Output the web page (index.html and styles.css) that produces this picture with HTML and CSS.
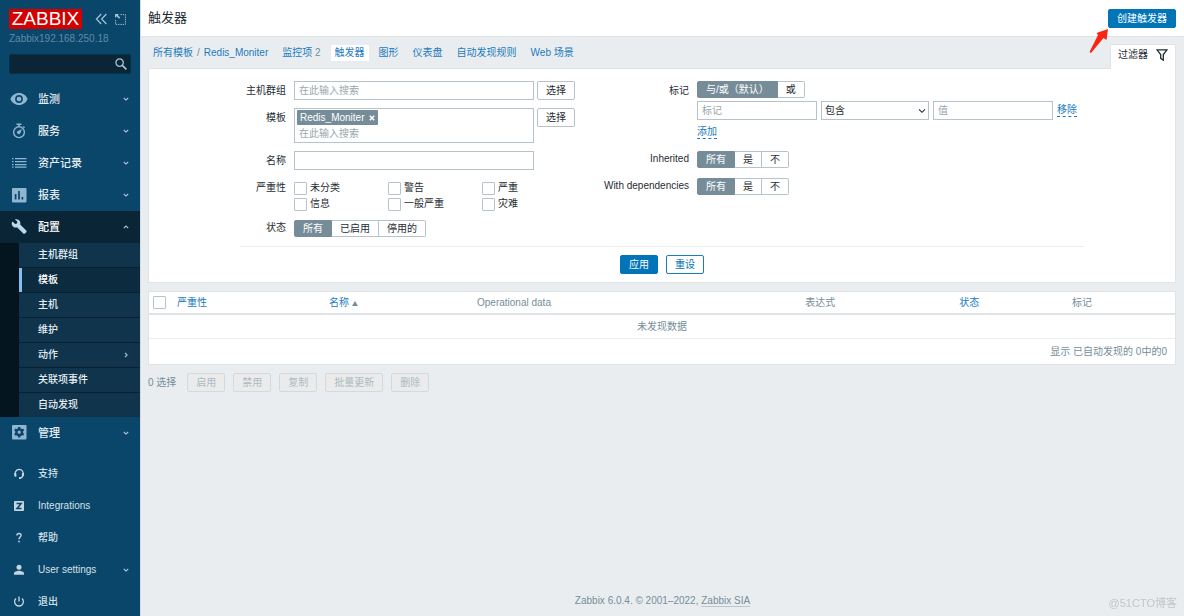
FILE: index.html
```html
<!DOCTYPE html>
<html lang="zh-CN">
<head>
<meta charset="utf-8">
<meta name="viewport" content="width=device-width, initial-scale=1">
<title>触发器</title>
<link rel="stylesheet" href="styles.css">
</head>
<body>
<svg class="defs" aria-hidden="true">
  <symbol id="down" viewBox="0 0 8 8"><path d="M1.8 3 4 5.1 6.2 3" fill="none" stroke="currentColor" stroke-width="1.1"/></symbol>
  <symbol id="up" viewBox="0 0 8 8"><path d="M1.8 5.2 4 3.1 6.2 5.2" fill="none" stroke="currentColor" stroke-width="1.1"/></symbol>
  <symbol id="right" viewBox="0 0 8 8"><path d="M3 1.8 5.1 4 3 6.2" fill="none" stroke="currentColor" stroke-width="1.1"/></symbol>
</svg>
<div class="page">
  <aside class="sidebar">
    <div class="brand">
      <a class="logo" href="#">ZABBIX</a>
      <button class="icon-button" aria-label="收起"><svg width="13" height="12" viewBox="0 0 13 12"><path d="M6.2 1 1.4 6l4.8 5M11.4 1 6.6 6l4.8 5" fill="none" stroke="currentColor" stroke-width="1.2"/></svg></button>
      <button class="icon-button" aria-label="隐藏"><svg width="11" height="11" viewBox="0 0 11 11"><path d="M5.5.6h4.9v9.8H.6V5.5" fill="none" stroke="currentColor" stroke-dasharray="1.3 1"/><path d="M0 0h4L2.8 1.2l2.4 2.4-1.1 1.1-2.5-2.5L0 4z" fill="currentColor"/></svg></button>
    </div>
    <div class="server">Zabbix192.168.250.18</div>
    <form class="search">
      <input type="text" aria-label="搜索">
      <button class="icon-button" type="button" aria-label="搜索"><svg width="12" height="12" viewBox="0 0 12 12"><circle cx="4.6" cy="4.6" r="3.7" fill="none" stroke="currentColor" stroke-width="1.3"/><path d="m7.3 7.3 4.1 4" stroke="currentColor" stroke-width="1.7"/></svg></button>
    </form>
    <ul class="menu">
      <li><a href="#"><svg class="icon" viewBox="0 0 18 18"><path d="M9 3C5 3 1.8 5.400.4 9 1.800 12.600 5 15 9 15s7.200-2.400 8.600-6C16.200 5.400 13 3 9 3z" fill="currentColor"/><circle cx="9" cy="9" r="3.900" fill="#0a466a"/><circle cx="9" cy="9" r="2.300" fill="currentColor"/></svg><span>监测</span><svg class="arrow"><use href="#down"/></svg></a></li>
      <li><a href="#"><svg class="icon" viewBox="0 0 18 18"><g fill="none" stroke="currentColor" stroke-width="1.400"><circle cx="9" cy="10.200" r="5.400"/><path d="M6.500 2.200h5M9 2.500V5M13.200 4.500l1.300 1.300"/></g><path d="m12 7-1.700 4.200a1.700 1.700 0 1 1-2.300-2.300z" fill="currentColor"/></svg><span>服务</span><svg class="arrow"><use href="#down"/></svg></a></li>
      <li><a href="#"><svg class="icon" viewBox="0 0 18 18"><path d="M2 4.700h1.500M2 7.700h1.500M2 10.700h1.500M2 13.200h1.500M5 4.700h11.500M5 7.700h11.500M5 10.700h11.500M5 13.200h11.500" stroke="currentColor" stroke-width="1.200"/></svg><span>资产记录</span><svg class="arrow"><use href="#down"/></svg></a></li>
      <li><a href="#"><svg class="icon" viewBox="0 0 18 18"><rect x="2" y="2" width="14.500" height="14.500" rx="1" fill="currentColor"/><path d="M5.600 8v5.500M9 5v8.500M12.400 11v2.500" stroke="#0a466a" stroke-width="1.700"/></svg><span>报表</span><svg class="arrow"><use href="#down"/></svg></a></li>
      <li class="open"><a href="#"><svg class="icon" viewBox="0 0 18 18"><path d="m2.500 3.400 2.700 2.500 1.800-.4.300-1.900L4.900 1.400c2.300-.7 4.600.4 5.300 2.500.3.900.2 1.800 0 2.600l6 6c.6.6.6 1.200.1 1.700l-1.300 1.300c-.5.5-1.100.5-1.700-.1l-6-6c-2.500.7-4.900-.4-5.500-2.900-.3-1.100 0-2.200.7-3.100z" fill="currentColor"/></svg><span>配置</span><svg class="arrow"><use href="#up"/></svg></a>
        <ul class="submenu">
          <li><a href="#">主机群组</a></li>
          <li class="current"><a href="#">模板</a></li>
          <li><a href="#">主机</a></li>
          <li><a href="#">维护</a></li>
          <li><a href="#">动作<svg class="arrow"><use href="#right"/></svg></a></li>
          <li><a href="#">关联项事件</a></li>
          <li><a href="#">自动发现</a></li>
        </ul>
      </li>
      <li><a href="#"><svg class="icon" viewBox="0 0 18 18"><rect x="2" y="1" width="14.500" height="14.500" rx="1" fill="currentColor"/><circle cx="9.200" cy="8.200" r="2.800" fill="none" stroke="#0a466a" stroke-width="2.400"/><path d="M9.200 3v2M9.200 11.400v2M4.700 5.600l1.700 1M12 9.800l1.700 1M4.700 10.800l1.700-1M12 6.600l1.700-1" stroke="#0a466a" stroke-width="2.300"/></svg><span>管理</span><svg class="arrow"><use href="#down"/></svg></a></li>
    </ul>
    <ul class="menu user-menu">
      <li><a href="#"><svg class="icon" viewBox="0 0 18 18"><path d="M6 11.300A4.300 4.300 0 0 1 9 4.300a4.300 4.300 0 0 1 4.300 4.400c0 2.500-1.400 4-3.600 4.500" fill="none" stroke="currentColor" stroke-width="1.300"/><path d="M4.300 8h2v3.500h-2zM11.900 8h1.900v3h-1.900zM9 12.300h1.900v1.600H9z" fill="currentColor"/></svg><span>支持</span></a></li>
      <li><a href="#"><svg class="icon" viewBox="0 0 18 18"><rect x="4" y="4" width="10" height="10" rx="1" fill="currentColor"/><path d="M6.500 6.500h4.700L7 11.500h4.600" fill="none" stroke="#0a466a" stroke-width="1.500"/></svg><span>Integrations</span></a></li>
      <li><a href="#"><svg class="icon" viewBox="0 0 18 18"><path d="M6.900 6.500c0-1.300.9-2 2.100-2s2.100.7 2.100 1.800c0 1.600-2.100 1.800-2.100 3.900" fill="none" stroke="currentColor" stroke-width="1.400"/><path d="M8.200 11.700h1.600v1.600H8.200z" fill="currentColor"/></svg><span>帮助</span></a></li>
      <li><a href="#"><svg class="icon" viewBox="0 0 18 18"><circle cx="9" cy="6.200" r="2.500" fill="currentColor"/><path d="M4 13.700v-1.200C4 10.700 7 9.800 9 9.800s5 .9 5 2.700v1.200z" fill="currentColor"/></svg><span>User settings</span><svg class="arrow"><use href="#down"/></svg></a></li>
      <li><a href="#"><svg class="icon" viewBox="0 0 18 18"><path d="M6 5.400a4.400 4.400 0 1 0 6 0M9 3.500v5" fill="none" stroke="currentColor" stroke-width="1.300"/></svg><span>退出</span></a></li>
    </ul>
  </aside>

  <div class="content">
    <header class="header">
      <h1>触发器</h1>
      <div class="create">
        <button class="btn primary">创建触发器</button>
        <svg class="pointer" width="22" height="28" viewBox="0 0 22 28"><path d="m20 2-1.500 11-3-2L3 26l-1.500-1L10 8 8.500 6z" fill="#fb2413"/></svg>
      </div>
    </header>
    <main>
      <div class="top-row">
        <nav class="crumbs">
          <span class="path"><a href="#">所有模板</a><span>/</span><a href="#">Redis_Moniter</a></span>
          <span><a href="#">监控项</a> <span>2</span></span>
          <a class="selected" href="#">触发器</a>
          <a href="#">图形</a>
          <a href="#">仪表盘</a>
          <a href="#">自动发现规则</a>
          <a href="#">Web 场景</a>
        </nav>
        <button class="filter-tab">过滤器<svg width="12" height="12" viewBox="0 0 12 12"><path d="M1 .8h10L7.300 5.500v5.700L4.700 9.400V5.500z" fill="none" stroke="currentColor" stroke-width="1.300"/></svg></button>
      </div>

      <form class="panel filter">
        <div class="filter-body">
          <div class="fields left">
            <label for="groups">主机群组</label>
            <div class="pick"><div class="multi"><input id="groups" type="text" placeholder="在此输入搜索"></div><button class="btn plain" type="button">选择</button></div>
            <label for="templates">模板</label>
            <div class="pick"><div class="multi"><span class="tag">Redis_Moniter<button type="button" aria-label="移除"><svg width="6" height="6" viewBox="0 0 6 6"><path d="m.8.800 4.400 4.400M5.200.8.800 5.200" stroke="currentColor" stroke-width="1.500"/></svg></button></span><input id="templates" type="text" placeholder="在此输入搜索"></div><button class="btn plain" type="button">选择</button></div>
            <label for="name">名称</label>
            <div class="pick"><input id="name" class="box" type="text"></div>
            <span class="label">严重性</span>
            <div class="checks">
              <label><input type="checkbox">未分类</label><label><input type="checkbox">警告</label><label><input type="checkbox">严重</label>
              <label><input type="checkbox">信息</label><label><input type="checkbox">一般严重</label><label><input type="checkbox">灾难</label>
            </div>
            <span class="label short">状态</span>
            <div class="segments"><label><input type="radio" name="state" checked>所有</label><label><input type="radio" name="state">已启用</label><label><input type="radio" name="state">停用的</label></div>
          </div>
          <div class="fields right">
            <span class="label">标记</span>
            <div class="tags">
              <div class="segments"><label><input type="radio" name="eval" checked>与/或（默认）</label><label><input type="radio" name="eval">或</label></div>
              <div class="tag-row">
                <input class="box" type="text" placeholder="标记" aria-label="标记">
                <div class="select"><select class="box" aria-label="运算符"><option>包含</option></select><svg width="8" height="8" viewBox="0 0 8 8"><path d="m1 2.300 3 3 3-3" fill="none" stroke="currentColor" stroke-width="1.100"/></svg></div>
                <input class="box" type="text" placeholder="值" aria-label="值">
                <a class="dashed" href="#">移除</a>
              </div>
              <div class="add"><a class="dashed" href="#">添加</a></div>
            </div>
            <span class="label short">Inherited</span>
            <div class="segments"><label><input type="radio" name="inh" checked>所有</label><label><input type="radio" name="inh">是</label><label><input type="radio" name="inh">不</label></div>
            <span class="label short">With dependencies</span>
            <div class="segments"><label><input type="radio" name="dep" checked>所有</label><label><input type="radio" name="dep">是</label><label><input type="radio" name="dep">不</label></div>
          </div>
        </div>
        <div class="filter-actions"><button class="btn primary" type="button">应用</button><button class="btn outline" type="button">重设</button></div>
      </form>

      <table class="panel list">
        <colgroup><col class="c-check"><col class="c-severity"><col class="c-name"><col class="c-data"><col class="c-expr"><col class="c-status"><col></colgroup>
        <thead><tr>
          <th><input type="checkbox" aria-label="全选"></th>
          <th><a href="#">严重性</a></th>
          <th><a href="#">名称 <span class="sort"></span></a></th>
          <th>Operational data</th><th>表达式</th><th><a href="#">状态</a></th><th>标记</th>
        </tr></thead>
        <tbody>
          <tr><td class="empty" colspan="7">未发现数据</td></tr>
          <tr><td class="total" colspan="7">显示 已自动发现的 0中的0</td></tr>
        </tbody>
      </table>

      <div class="bulk">
        <span>0 选择</span>
        <button class="btn" disabled>启用</button><button class="btn" disabled>禁用</button><button class="btn" disabled>复制</button><button class="btn" disabled>批量更新</button><button class="btn" disabled>删除</button>
      </div>
    </main>
    <footer>Zabbix 6.0.4. © 2001–2022, <a href="#">Zabbix SIA</a></footer>
  </div>
</div>
<div class="watermark">@51CTO博客</div>
</body>
</html>
```
FILE: styles.css
```css
* { box-sizing: border-box; }
body {
  margin: 0;
  background: #e9edf0;
  color: #1f2c33;
  font: 10px/14px "Liberation Sans", "Noto Sans CJK SC", sans-serif;
}
button, input, select { font: inherit; color: inherit; margin: 0; }
button { cursor: pointer; }
a { color: #1c7bbd; text-decoration: none; }
ul { list-style: none; margin: 0; padding: 0; }
.defs { position: absolute; width: 0; height: 0; }
.page { display: flex; min-height: 100vh; }

/* sidebar */
.sidebar {
  flex: none;
  width: 140px;
  height: 100vh;
  overflow: hidden;
  background: #0a466a;
  color: #8fb6d0;
}
.brand { display: flex; align-items: center; padding: 9px 14px 0 9px; }
.logo {
  width: 74px;
  height: 20px;
  margin-right: 13px;
  background: #d40000;
  color: #fff;
  font-size: 19px;
  line-height: 20px;
  text-align: center;
}
.icon-button { display: flex; padding: 0; border: 0; background: none; color: #a5c3d6; }
.icon-button + .icon-button { margin-left: 7px; }
.server { padding: 3px 9px 0; color: #5f8ba8; }
.search {
  display: flex;
  align-items: center;
  height: 20px;
  margin: 8px 9px 9px;
  padding-right: 3px;
  border: 1px solid #07304a;
  border-radius: 2px;
  background: #0a2536;
}
.search input { flex: 1; min-width: 0; border: 0; background: none; color: #fff; outline: 0; }
.menu a { display: flex; align-items: center; height: 32px; padding: 0 10px; color: #e4edf3; font-size: 11px; font-weight: 500; }
.menu .icon { width: 18px; height: 18px; margin-right: 10px; color: #8fb6d0; }
.arrow { width: 8px; height: 8px; margin-left: auto; color: #a9c6d9; }
.menu .open > a { background: #0a2536; color: #fff; }
.menu .open .icon { color: #b9d8ee; }
.menu .submenu { border-left: 19px solid #05151f; }
.submenu li { border-bottom: 1px solid #08202f; background: #0f344c; }
.submenu li:last-child { border-bottom: 0; }
.menu .submenu a { height: 24px; padding-left: 19px; font-size: 10px; }
.menu .submenu .current a { padding-left: 16px; border-left: 3px solid #7fc1f0; background: #0c2b3f; color: #fff; }
.user-menu { margin-top: 9px; }
.user-menu a { font-size: 10px; color: #d3e0e9; }
.menu.user-menu .icon { color: #c3d5e1; }

/* header */
.content { flex: 1; min-width: 0; display: flex; flex-direction: column; border-left: 1px solid #d5dce1; }
.header {
  display: flex;
  align-items: center;
  justify-content: space-between;
  height: 37px;
  padding: 0 8px 0 7px;
  border-bottom: 1px solid #dfe4e7;
  background: #fff;
}
h1 { margin: 0; font-size: 13px; font-weight: 400; }
.create { position: relative; display: flex; }
.pointer { position: absolute; right: 66px; top: 18px; }

.btn {
  height: 19px;
  padding: 0 8px;
  border: 1px solid #1c7bbd;
  border-radius: 2px;
  background: #fff;
  line-height: 15px;
  white-space: nowrap;
}
.primary { border-color: #0275b8; background: #0275b8; color: #fff; }
.outline { color: #0275b8; }
.plain { border-color: #b7c3ca; }
.btn:disabled { border-color: #d3dade; background: #ebebeb; color: #acbbc2; }

/* navigation row */
main { padding: 0 8px 0 7px; }
.top-row { display: flex; align-items: flex-end; justify-content: space-between; height: 31px; }
.crumbs { display: flex; align-items: center; gap: 14px; height: 31px; padding-left: 5px; color: #768d99; }
.path span { margin: 0 4px; }
.crumbs .selected { margin: 0 -4px; padding: 1px 4px; background: #fff; }
.filter-tab {
  display: flex;
  align-items: center;
  gap: 8px;
  height: 25px;
  margin-bottom: -1px;
  padding: 0 7px 4px;
  border: 1px solid #dfe4e7;
  border-bottom: 0;
  background: #fff;
  z-index: 1;
}

/* filter */
.panel { border: 1px solid #dfe4e7; background: #fff; }
.filter { padding: 12px 8px 8px; }
.filter-body {
  display: grid;
  grid-template-columns: 335px 1fr;
  gap: 8px;
  max-width: 844px;
  margin: 0 auto;
  padding-bottom: 9px;
  border-bottom: 1px solid #ebeef0;
}
.fields { display: grid; align-content: start; gap: 8px; }
.left { grid-template-columns: 46px 1fr; }
.right { grid-template-columns: 106px 1fr; row-gap: 10px; }
.fields > label, .label { text-align: right; line-height: 19px; white-space: nowrap; }
.fields > .short { line-height: 16px; }
.pick { display: grid; grid-template-columns: 1fr 38px; align-items: start; gap: 3px; }
.multi, .box { border: 1px solid #b7c3ca; background: #fff; }
.multi { padding: 1px 2px; }
.multi input { display: block; width: 100%; height: 15px; padding: 0 2px; border: 0; outline: 0; }
.multi .tag + input { margin-top: 1px; }
.box { min-width: 0; height: 19px; padding: 0 4px; border-radius: 0; }
.select { position: relative; display: flex; }
.select select { flex: 1; padding: 0 3px; appearance: none; }
.select svg { position: absolute; right: 3px; top: 6px; pointer-events: none; }
::placeholder { color: #9aa5ab; opacity: 1; }
.tag {
  display: inline-flex;
  align-items: center;
  gap: 5px;
  height: 15px;
  padding: 0 3px;
  border-radius: 1px;
  background: #768d99;
  color: #fff;
  vertical-align: top;
}
.tag button { display: flex; padding: 0; border: 0; background: none; }
.checks { display: grid; grid-template-columns: 94px 94px 1fr; padding-top: 2px; }
.checks label { display: flex; align-items: center; gap: 3px; height: 16px; }
input[type="checkbox"] { appearance: none; width: 13px; height: 13px; border: 1px solid #b7c3ca; border-radius: 1px; background: #fff; }
.segments { display: flex; }
.segments label {
  position: relative;
  height: 17px;
  padding: 0 8px;
  border: 1px solid #b7c3ca;
  border-left-width: 0;
  line-height: 15px;
  white-space: nowrap;
}
.segments label:first-child { border-left-width: 1px; border-radius: 2px 0 0 2px; }
.segments label:last-child { border-radius: 0 2px 2px 0; }
.segments label:has(:checked) { border-color: #768d99; background: #768d99; color: #fff; }
.segments input { position: absolute; opacity: 0; width: 1px; height: 1px; }
.tag-row { display: grid; grid-template-columns: 120px 108px 120px auto; justify-content: start; align-items: center; gap: 4px; margin-top: 3px; }
.dashed { display: inline-block; line-height: 12px; border-bottom: 1px dashed #1c7bbd; }
.add { height: 21px; padding-top: 5px; }
.filter-actions { display: flex; justify-content: center; gap: 8px; padding-top: 8px; }

/* list */
.list { width: 100%; margin-top: 8px; border-collapse: separate; border-spacing: 0; table-layout: fixed; color: #768d99; }
.c-check { width: 24px; }
.c-severity { width: 152px; }
.c-name { width: 148px; }
.c-data { width: 32%; }
.c-expr { width: 15%; }
.c-status { width: 11%; }
.list th { height: 23px; padding: 0 4px; border-bottom: 2px solid #dfe4e7; font-weight: 400; text-align: left; }
.list th input { display: block; }
.list td { height: 25px; padding: 0 8px; }
.sort { display: inline-block; border: 3px solid transparent; border-top: 0; border-bottom: 5px solid #768d99; }
.list .empty { height: 24px; border-bottom: 1px solid #ebeef0; text-align: center; }
.total { text-align: right; }
.bulk { display: flex; align-items: center; gap: 8px; padding-top: 8px; color: #768d99; }
.bulk span { margin-right: 3px; }
footer { margin-top: auto; padding: 8px; color: #768d99; text-align: center; }
footer a { color: inherit; border-bottom: 1px solid #bcc6cc; }
.watermark { position: fixed; right: 7px; bottom: 6px; color: #c2c6c9; font-size: 11px; }
```
